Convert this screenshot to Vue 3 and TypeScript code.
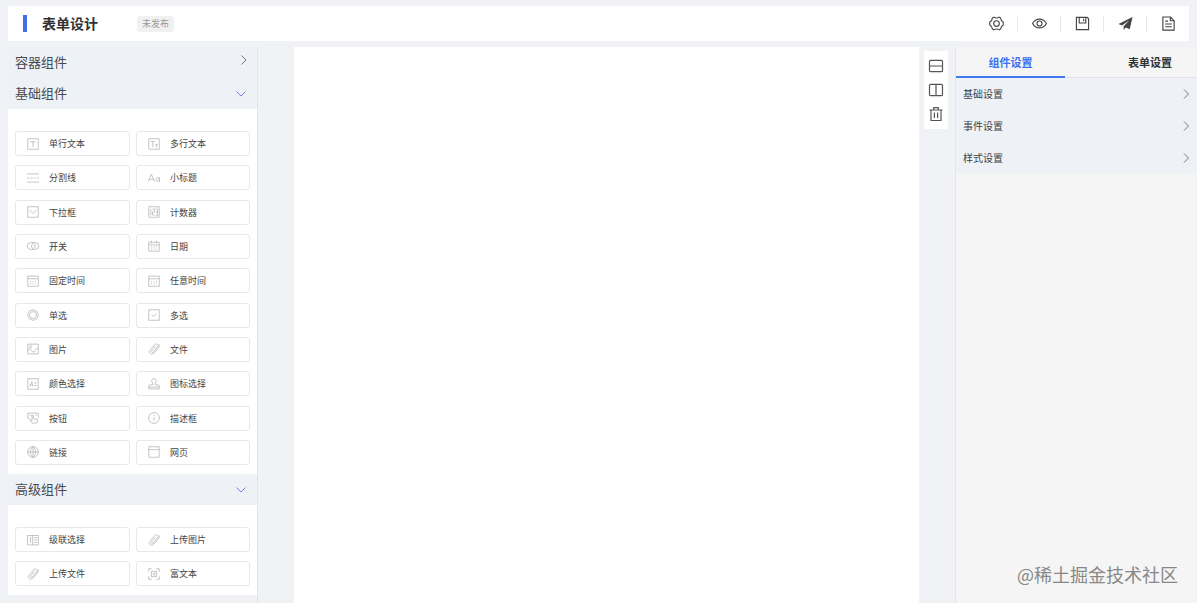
<script setup lang="ts">
import { ref } from 'vue'

interface Item {
  label: string
  icon: string
}
interface Group {
  title: string
  open: boolean
  tall?: boolean
  items: Item[]
}

/* 16 x 16 line icons */
const icons: Record<string, string> = {
  text: 'M1 1h14v14H1zM4.500 5h7M8 5v7',
  textarea: 'M1 1h14v14H1zM3.500 4.500h6M6.500 4.500v7.500M9.500 8.500h3.500M11.200 8.500v4',
  divider: 'M0 2.500h16M0 8h3M5 8h2.500M9 8h2.500M13.500 8H16M0 13.500h16',
  heading: 'M0 13L4.500 3L9 13M1.600 9.800h5.800M15.400 7v6M15.400 10a2.300 2.500 0 1 1-4.600 0a2.300 2.500 0 1 1 4.600 0',
  select: 'M1 1h14v14H1zM3.500 5.500L8 10l4.500-4.500',
  counter: 'M1 1h14v14H1zM3.800 4v8.500M6 4h2.500v4H6v4h2.500M10.300 4h2.500v8.500h-2.500M10.300 8h2.500',
  toggle: 'M5 3.500h6a4.500 4.500 0 0 1 0 9H5a4.500 4.500 0 0 1 0-9zM8.500 3.700a5 5 0 0 0 0 8.600M8.500 3.700a5 5 0 0 1 0 8.600',
  date: 'M1 3h14v12H1zM1 6.500h14M4.500 .800v3.500M11.500 .800v3.500M4 9.300h1.500M7.300 9.300h1.500M10.500 9.300H12M4 12.200h1.500M7.300 12.200h1.500M10.500 12.200H12',
  time: 'M1 1.500h14V15H1zM1 5h14M4 11.800h1.500M4 9h1.500M7.300 11.800h1.500M7.300 9h1.500M10.800 8.500H12M10.800 11H12',
  radio: 'M8 .800l5.100 2.100L15.200 8l-2.100 5.100L8 15.200l-5.100-2.100L.800 8l2.100-5.100zM12.600 8a4.600 4.600 0 1 1-9.200 0a4.600 4.600 0 1 1 9.200 0',
  checkbox: 'M1 1h14v14H1zM5 8l2.300 2.300L11.500 6',
  image: 'M1 1.500h14v13H1zM1 9l3-1.500C6 8 6 12 8.500 12S10.500 8 13 8l2-1.500M6 4.800a1.300 1.300 0 1 1-2.600 0a1.300 1.300 0 1 1 2.600 0',
  clip: 'M13.500 7L7.800 13.500c-3 3.200-8 .2-5.300-3.600L8.800 2.200c2.400-2.500 6 .3 4.200 3L7.300 12c-1.600 1.500-3.400.2-2.300-1.500L10 4.200M13.500 7c1.500-1.800 2-4 .8-5.500',
  color: 'M1 1h14v14H1zM3.500 11.500L6.300 5l1.700 6.500M4.500 9.300h3M9.500 6.500H13M9.500 9.800H13',
  stamp: 'M8 .800a3 3 0 0 1 1.800 5.500L9.500 9H13a2 2 0 0 1 2 2v3.500H1V11a2 2 0 0 1 2-2h3.500L6.200 6.300A3 3 0 0 1 8 .800zM1 12h14',
  button: 'M3.500 8.500H1v-7h14v6.500M3.500 4.500h2.500M6.800 14.800L3.500 10.800l1.200-.8l2 1.500V4.800h1.800v4l5.500 1.200v3l-1.200 1.800zM11 4.500h2',
  info: 'M15.200 8A7.200 7.200 0 1 1 .800 8a7.200 7.200 0 1 1 14.400 0M8 6.500V12M8 3.800v1.400',
  globe: 'M15.200 8A7.200 7.200 0 1 1 .800 8a7.200 7.200 0 1 1 14.400 0M8 .800v14.400M.800 8h14.400M8 .800c-4.600 4-4.600 10.400 0 14.400M8 .800c4.600 4 4.600 10.400 0 14.400',
  window: 'M1 1h14v14H1zM1 4.800h14',
  cascade: 'M.500 2h15v12.500H.500zM3.500 5h2.500M4.800 5v6.500M7.500 2v12.500M9.500 5H14M9.500 8H14M9.500 11.300H14',
  rich: 'M1 5V1h4M11 1h4v4M15 11v4h-4M5 15H1v-4M4.500 4.500h7v7h-7zM6.500 7h3.500M6.500 9.200h3.500',
}

const groups = ref<Group[]>([
  { title: '容器组件', open: false, items: [] },
  {
    title: '基础组件',
    open: true,
    tall: true,
    items: [
      { label: '单行文本', icon: 'text' },
      { label: '多行文本', icon: 'textarea' },
      { label: '分割线', icon: 'divider' },
      { label: '小标题', icon: 'heading' },
      { label: '下拉框', icon: 'select' },
      { label: '计数器', icon: 'counter' },
      { label: '开关', icon: 'toggle' },
      { label: '日期', icon: 'date' },
      { label: '固定时间', icon: 'time' },
      { label: '任意时间', icon: 'time' },
      { label: '单选', icon: 'radio' },
      { label: '多选', icon: 'checkbox' },
      { label: '图片', icon: 'image' },
      { label: '文件', icon: 'clip' },
      { label: '颜色选择', icon: 'color' },
      { label: '图标选择', icon: 'stamp' },
      { label: '按钮', icon: 'button' },
      { label: '描述框', icon: 'info' },
      { label: '链接', icon: 'globe' },
      { label: '网页', icon: 'window' },
    ],
  },
  {
    title: '高级组件',
    open: true,
    items: [
      { label: '级联选择', icon: 'cascade' },
      { label: '上传图片', icon: 'clip' },
      { label: '上传文件', icon: 'clip' },
      { label: '富文本', icon: 'rich' },
    ],
  },
])

const actions = [
  { name: '设置', path: 'M5.200 1.200Q8 3 10.800 1.200L12.500 2.300Q12.500 5 15.200 6.500V9.500Q12.500 11 12.500 13.700L10.800 14.800Q8 13 5.200 14.800L3.500 13.700Q3.500 11 .800 9.500V6.500Q3.500 5 3.500 2.300zM11 8a3 3 0 1 1-6 0a3 3 0 1 1 6 0', fill: false },
  { name: '预览', path: 'M.600 8C4 1.700 12 1.700 15.400 8C12 14.300 4 14.300.6 8zM10.700 8a2.700 2.700 0 1 1-5.400 0a2.700 2.700 0 1 1 5.400 0', fill: false },
  { name: '保存', path: 'M1.500 1.500h11.500l1.500 1.500v11.500h-13zM4.500 1.500v6h7v-6M9.200 3v2.500', fill: false },
  { name: '发布', path: 'M15.500 1L.500 8.500l3.800 1.700L12 4.500l-6 6.500v4l2.300-2.800l4.200 2z', fill: true },
  { name: '文档', path: 'M2 1h8l4 4v10H2zM10 1v4h4M4.500 5.500h3M4.500 8.500h7M4.500 11.500h7', fill: false },
]

const tools = [
  { name: '上下布局', path: 'M2.500 2.300h11a1 1 0 0 1 1 1v9.400a1 1 0 0 1-1 1h-11a1 1 0 0 1-1-1V3.300a1 1 0 0 1 1-1zM1.500 8h13' },
  { name: '左右布局', path: 'M2.500 2.300h11a1 1 0 0 1 1 1v9.400a1 1 0 0 1-1 1h-11a1 1 0 0 1-1-1V3.300a1 1 0 0 1 1-1zM8 2.300v11.400' },
  { name: '清空', path: 'M1.500 4h13M5.700 4V1.700h4.600V4M3 4v10.500h10V4M6.400 6.500v5.500M9.600 6.500v5.500' },
]

const tabs = ['组件设置', '表单设置']
const activeTab = ref(0)
const settings = ['基础设置', '事件设置', '样式设置']
</script>

<template>
  <div class="page">
    <header class="topbar">
      <h1 class="title">表单设计</h1>
      <span class="status">未发布</span>
      <nav class="actions">
        <button v-for="a in actions" :key="a.name" type="button" :aria-label="a.name">
          <svg viewBox="0 0 16 16" :class="{ solid: a.fill }"><path :d="a.path" /></svg>
        </button>
      </nav>
    </header>

    <div class="workspace">
      <aside class="palette">
        <section v-for="g in groups" :key="g.title">
          <button type="button" class="group-head" :class="{ open: g.open }" :aria-expanded="g.open" @click="g.open = !g.open">
            <span>{{ g.title }}</span>
            <svg viewBox="0 0 12 12" class="chevron"><path d="M3.500 1.500L8 6l-4.500 4.500" /></svg>
          </button>
          <div v-if="g.open && g.items.length" class="group-body" :class="{ tall: g.tall }">
            <button v-for="i in g.items" :key="i.label" type="button" class="item">
              <svg viewBox="0 0 16 16"><path :d="icons[i.icon]" /></svg>
              <span>{{ i.label }}</span>
            </button>
          </div>
        </section>
      </aside>

      <main class="stage">
        <div class="canvas"></div>
        <div class="tools">
          <button v-for="t in tools" :key="t.name" type="button" :aria-label="t.name">
            <svg viewBox="0 0 16 16"><path :d="t.path" /></svg>
          </button>
        </div>
      </main>

      <aside class="inspector">
        <div class="tabs" role="tablist">
          <button
            v-for="(t, n) in tabs"
            :key="t"
            type="button"
            role="tab"
            :aria-selected="n === activeTab"
            :class="{ active: n === activeTab }"
            @click="activeTab = n"
          >{{ t }}</button>
        </div>
        <button v-for="s in settings" :key="s" type="button" class="setting">
          <span>{{ s }}</span>
          <svg viewBox="0 0 12 12" class="chevron"><path d="M4 1.500L8.500 6L4 10.500" /></svg>
        </button>
      </aside>
    </div>

    <div class="watermark">@稀土掘金技术社区</div>
  </div>
</template>

<style>
body {
  margin: 0;
}
</style>

<style scoped>
.page {
  box-sizing: border-box;
  position: relative;
  display: flex;
  flex-direction: column;
  min-height: 100vh;
  padding-top: 6px;
  background: #f0f2f5;
  color: #303133;
  font-family: "Noto Sans CJK SC", "Noto Sans", sans-serif;
}
button {
  box-sizing: border-box;
  margin: 0;
  padding: 0;
  border: 0;
  background: none;
  color: inherit;
  font: inherit;
  cursor: pointer;
}
svg {
  display: block;
  flex: none;
  fill: none;
  stroke: currentColor;
}
.topbar {
  display: flex;
  align-items: center;
  height: 35px;
  margin: 0 8px;
  background: #fff;
}
.title {
  margin: 0 0 0 15px;
  padding-left: 15px;
  border-left: 4px solid #3f6fee;
  font-size: 14px;
  line-height: 17px;
  font-weight: 700;
}
.status {
  margin-left: 39px;
  padding: 0 5px;
  border-radius: 3px;
  background: #f1f1f2;
  color: #999;
  font-size: 9px;
  line-height: 16px;
}
.actions {
  display: flex;
  margin-left: auto;
}
.actions button {
  display: flex;
  align-items: center;
  justify-content: center;
  width: 43px;
  height: 16px;
  border-left: 1px solid #e8e8ea;
  color: #444;
}
.actions button:first-child {
  border-color: transparent;
}
.actions svg {
  width: 15px;
  height: 15px;
  stroke-width: 1.2;
}
.actions .solid {
  fill: currentColor;
  stroke: none;
}
.workspace {
  display: flex;
  flex: 1;
  padding: 6px 0 0 8px;
}
.palette {
  flex: none;
  width: 249px;
  border-right: 1px solid #dfe3ea;
}
.group-head {
  display: flex;
  align-items: center;
  justify-content: space-between;
  width: 100%;
  height: 31px;
  padding: 0 7px;
  background: #eef2f7;
  color: #484a4e;
  font-size: 13px;
  line-height: 18px;
}
.group-head span,
.setting span {
  padding-bottom: 2px;
}
.chevron {
  width: 12px;
  height: 12px;
  color: #777;
}
.group-head .chevron {
  align-self: flex-start;
  margin-top: 7px;
}
.group-head.open .chevron {
  align-self: center;
  margin: 1px 3px 0 0;
  color: #7180f0;
  transform: rotate(90deg);
}
.group-body {
  box-sizing: border-box;
  display: grid;
  grid-template-columns: 115px 114px;
  grid-auto-rows: 25px;
  align-content: space-between;
  gap: 9px 6px;
  padding: 22px 7px 9px;
  background: #fff;
}
.group-body.tall {
  min-height: 365px;
}
.item {
  display: flex;
  align-items: center;
  gap: 10px;
  padding-left: 11px;
  border: 1px solid #e6e8ea;
  border-radius: 3px;
  background: #fff;
  color: #444;
  font-size: 9px;
}
.item svg {
  width: 12px;
  height: 12px;
  color: #b2b2b2;
}
.stage {
  display: flex;
  flex: 1;
  padding-left: 36px;
}
.canvas {
  flex: 1;
  background: #fff;
}
.tools {
  display: flex;
  flex-direction: column;
  align-self: flex-start;
  width: 24px;
  margin: 4px 7px 0 5px;
  padding: 3px 0;
  background: #fff;
}
.tools button {
  display: flex;
  align-items: center;
  justify-content: center;
  height: 24px;
  color: #555;
}
.tools svg {
  width: 16px;
  height: 16px;
  stroke-width: 1.2;
}
.inspector {
  box-sizing: border-box;
  flex: none;
  width: 242px;
  border-left: 1px solid #e2e5ea;
  background: #f5f5f5;
}
.tabs {
  display: flex;
  justify-content: space-between;
  border-bottom: 1px solid #dfe3e8;
}
.tabs button {
  flex: none;
  width: 109px;
  height: 31px;
  margin-bottom: -1px;
  border-bottom: 2px solid transparent;
  font-size: 11px;
  font-weight: 700;
}
.tabs button:last-child {
  width: 94px;
}
.tabs .active {
  border-bottom-color: #4079ee;
  color: #3b72f2;
}
.setting {
  display: flex;
  align-items: center;
  justify-content: space-between;
  width: 100%;
  height: 32px;
  padding: 0 5px 0 7px;
  background: #eef2f7;
  color: #404246;
  font-size: 10px;
}
.watermark {
  position: absolute;
  right: 19px;
  bottom: 15px;
  color: #888;
  font-size: 18px;
  line-height: 27px;
}
</style>
